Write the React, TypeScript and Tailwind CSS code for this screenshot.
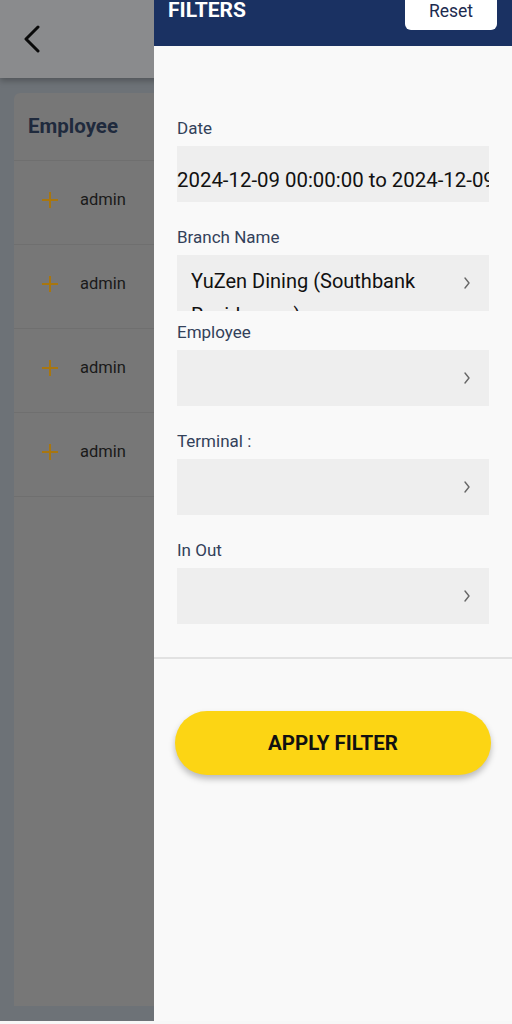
import React from 'react';

const Chevron = () => (
  <svg width="10" height="14" viewBox="0 0 10 14" className="shrink-0">
    <polyline points="3,2 7,7 3,12" fill="none" stroke="#666" strokeWidth="1.4" strokeLinecap="round" strokeLinejoin="round" />
  </svg>
);

const Label = ({ children }: { children: React.ReactNode }) => (
  <div className="text-[17px] leading-[20px] text-[#33415a]">{children}</div>
);

const Field = ({ label, mt }: { label: string; mt: string }) => (
  <div className={mt}>
    <Label>{label}</Label>
    <div className="mt-[8px] h-[56px] bg-[#eeeeee] flex items-center justify-end pr-[17px]">
      <Chevron />
    </div>
  </div>
);

const App = () => {
  const rows = ['admin', 'admin', 'admin', 'admin'];

  return (
    <div className="w-[512px] h-[1024px] overflow-hidden bg-[#f7f7f7] font-['Roboto',sans-serif]">
      <div className="relative h-[1021px] bg-[#6d7277]">
        {/* dimmed page behind the drawer */}
        <div className="h-[78px] bg-[#8a8b8d] shadow-[0_3px_6px_rgba(0,0,0,0.25)] flex items-center pl-[22px] relative z-10">
          <svg width="20" height="28" viewBox="0 0 20 28">
            <polyline points="16,2 4,14 16,26" fill="none" stroke="#0a0a0a" strokeWidth="3" strokeLinecap="round" strokeLinejoin="round" />
          </svg>
        </div>
        <div className="ml-[14px] mt-[15px] w-[200px] h-[913px] bg-[#777777] rounded-t-[6px]">
          <div className="h-[68px] flex items-center pl-[14px] border-b border-[#6f6f6f] text-[20.5px] font-bold text-[#1f2a3d]">
            Employee
          </div>
          {rows.map((r, i) => (
            <div key={i} className="h-[84px] flex items-center pb-[5px] pl-[27px] border-b border-[#6f6f6f]">
              <svg width="18" height="18" viewBox="0 0 18 18">
                <path d="M9 1v16M1 9h16" stroke="#a8760f" strokeWidth="2" />
              </svg>
              <span className="ml-[21px] text-[16.5px] text-[#1a1a1a]">{r}</span>
            </div>
          ))}
        </div>

        {/* drawer */}
        <div className="absolute top-0 left-[154px] w-[358px] h-[1021px] bg-[#f9f9f9] flex flex-col z-20">
          <div className="h-[46px] shrink-0 bg-[#1a3162] flex items-start justify-between pl-[14px] pr-[15px]">
            <span className="text-[21px] leading-[20px] font-bold text-white">FILTERS</span>
            <div className="w-[92px] h-[30px] bg-white rounded-b-[6px] flex items-center justify-center pb-[8px] text-[17.5px] text-[#1c2b4f]">
              Reset
            </div>
          </div>

          <div className="px-[23px]">
            <div className="mt-[72px]">
              <Label>Date</Label>
              <div className="mt-[8px] h-[56px] bg-[#eeeeee] flex items-center pt-[12px] overflow-hidden">
                <span className="whitespace-nowrap text-[20.4px] text-[#111]">2024-12-09 00:00:00 to 2024-12-09 23:59:59</span>
              </div>
            </div>

            <div className="mt-[25px]">
              <Label>Branch Name</Label>
              <div className="mt-[8px] h-[56px] bg-[#eeeeee] flex items-start pl-[14px] pr-[17px] overflow-hidden">
                <div className="w-[250px] h-[56px] overflow-hidden pt-[9px] text-[20px] leading-[34px] text-[#111]">YuZen Dining (Southbank Residences)</div>
                <div className="flex-1" />
                <div className="h-[56px] flex items-center"><Chevron /></div>
              </div>
            </div>

            <Field label="Employee" mt="mt-[11px]" />
            <Field label="Terminal :" mt="mt-[25px]" />
            <Field label="In Out" mt="mt-[25px]" />
          </div>

          <div className="mt-[33px] border-t-2 border-[#e2e2e2]" />

          <div className="px-[21px] mt-[52px]">
            <div className="h-[64px] rounded-full bg-[#fcd514] shadow-[0_4px_6px_rgba(0,0,0,0.25)] flex items-center justify-center text-[20.5px] font-bold text-[#111]">
              APPLY FILTER
            </div>
          </div>
        </div>
      </div>
    </div>
  );
};

export default App;
